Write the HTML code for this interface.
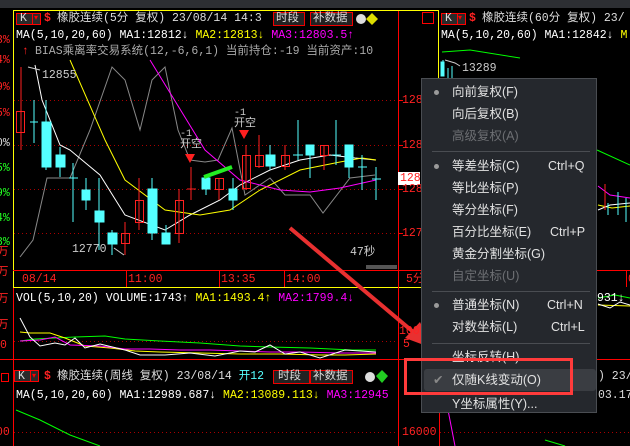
<!DOCTYPE html>
<html><head><meta charset="utf-8"><style>
*{margin:0;padding:0}
body{width:630px;height:446px;background:#000;overflow:hidden;position:relative;font-family:"Liberation Mono","Noto Sans CJK SC",monospace;}
.t{position:absolute;white-space:pre;font-size:11.5px;line-height:13px;}
.menu{position:absolute;left:421px;top:78px;width:176px;height:335px;background:#25282d;border:1px solid #4a4d52;box-sizing:border-box;}
.mi{position:absolute;left:30px;font-family:"Liberation Sans","Noto Sans CJK SC",sans-serif;font-size:12.5px;color:#e2e2e2;white-space:pre;line-height:16px}
.sc{position:absolute;font-family:"Liberation Sans",sans-serif;font-size:12.5px;color:#e2e2e2;line-height:16px}
.g{color:#6d6f73}
.sep{position:absolute;left:10px;right:6px;height:1px;background:#4a4d52}
.dot{position:absolute;left:12px;width:5px;height:5px;border-radius:50%;background:#9a9a9a}
</style></head><body>
<svg width="630" height="446" style="position:absolute;left:0;top:0">
<rect x="0" y="0" width="630" height="8" fill="#2d2f33"/>
<!-- left panel frame -->
<rect x="13.5" y="10.5" width="425" height="277" fill="none" stroke="#ffff00"/>
<line x1="398.5" y1="11" x2="398.5" y2="446" stroke="#ff0000"/>
<line x1="439.5" y1="288" x2="439.5" y2="446" stroke="#ff0000"/>
<line x1="13" y1="270.5" x2="630" y2="270.5" stroke="#ff0000"/>
<line x1="0" y1="359.5" x2="630" y2="359.5" stroke="#ff0000"/>
<line x1="126.5" y1="271" x2="126.5" y2="287" stroke="#f00"/>
<line x1="219.5" y1="271" x2="219.5" y2="287" stroke="#f00"/>
<line x1="284.5" y1="271" x2="284.5" y2="287" stroke="#f00"/>
<line x1="626.5" y1="271" x2="626.5" y2="287" stroke="#f00"/>
<line x1="13.5" y1="288" x2="13.5" y2="446" stroke="#f00"/>
<g stroke="#a00" stroke-dasharray="1,3">
<line x1="14" y1="100.5" x2="398" y2="100.5"/><line x1="14" y1="145.5" x2="398" y2="145.5"/>
<line x1="14" y1="189.5" x2="398" y2="189.5"/><line x1="14" y1="233.5" x2="398" y2="233.5"/>
<line x1="14" y1="432.5" x2="398" y2="432.5"/><line x1="440" y1="432.5" x2="630" y2="432.5"/>
<line x1="14" y1="341.5" x2="398" y2="341.5"/>
</g>
<g stroke="#f00"><line x1="398" y1="100.5" x2="403" y2="100.5"/><line x1="398" y1="145.5" x2="403" y2="145.5"/><line x1="398" y1="189.5" x2="403" y2="189.5"/><line x1="398" y1="233.5" x2="403" y2="233.5"/></g>
<!-- BIAS gray -->
<polyline fill="none" stroke="#888" points="20,257 33,240 47,178 70,178 90,130 112,67 125,80 140,130 152,80 165,67 178,130 190,160 205,162 218,160 232,128 245,195 270,178 285,195 310,195 323,213 350,178 375,175"/>
<polyline fill="none" stroke="#fff" points="35,65 42,100 60,145 70,150 100,175 125,215 165,230 190,215 220,200 240,185 270,170 300,160 330,155 355,158 376,160"/>
<polyline fill="none" stroke="#ffff00" points="70,60 105,140 125,180 165,210 200,215 230,210 260,190 300,170 340,162 362,158 376,160"/>
<polyline fill="none" stroke="#ff00ff" points="150,60 205,150 240,180 280,190 310,192 340,188 376,180"/>
<!-- candles -->
<g stroke="#54ffff" fill="#54ffff">
<line x1="34" y1="100" x2="34" y2="143"/><line x1="30" y1="122" x2="38" y2="122"/>
<line x1="46" y1="100" x2="46" y2="170"/><rect x="42" y="122" width="9" height="45"/>
<line x1="60" y1="147" x2="60" y2="177"/><rect x="56" y="155" width="9" height="12"/>
<line x1="73" y1="163" x2="73" y2="222"/><line x1="69" y1="178" x2="78" y2="178"/>
<line x1="86" y1="178" x2="86" y2="210"/><rect x="82" y="190" width="8" height="10"/>
<line x1="99" y1="178" x2="99" y2="250"/><rect x="95" y="211" width="9" height="11"/>
<line x1="112" y1="230" x2="112" y2="255"/><rect x="108" y="233" width="9" height="11"/>
<line x1="152" y1="178" x2="152" y2="240"/><rect x="148" y="189" width="9" height="44"/>
<line x1="166" y1="225" x2="166" y2="244"/><rect x="162" y="233" width="8" height="11"/>
<line x1="206" y1="175" x2="206" y2="195"/><rect x="202" y="178" width="8" height="11"/>
<line x1="233" y1="178" x2="233" y2="210"/><rect x="229" y="189" width="8" height="11"/>
<line x1="270" y1="145" x2="270" y2="170"/><rect x="266" y="155" width="9" height="11"/>
<line x1="298" y1="120" x2="298" y2="160"/><line x1="293" y1="155" x2="303" y2="155"/>
<line x1="310" y1="145" x2="310" y2="178"/><rect x="306" y="145" width="8" height="10"/>
<line x1="336" y1="120" x2="336" y2="165"/><line x1="332" y1="155" x2="341" y2="155"/>
<line x1="349" y1="145" x2="349" y2="178"/><rect x="345" y="145" width="8" height="22"/>
<line x1="362" y1="155" x2="362" y2="190"/><line x1="358" y1="167" x2="367" y2="167"/>
<line x1="376" y1="167" x2="376" y2="200"/><line x1="372" y1="179" x2="381" y2="179"/>
</g>
<g stroke="#ff2020" fill="none">
<line x1="21" y1="67" x2="21" y2="150"/><rect x="16.5" y="111.5" width="8" height="21"/>
<line x1="125" y1="222" x2="125" y2="255"/><rect x="121.5" y="233.5" width="8" height="10"/>
<line x1="139" y1="178" x2="139" y2="230"/><rect x="135.5" y="200.5" width="8" height="22"/>
<line x1="179" y1="189" x2="179" y2="243"/><rect x="175.5" y="200.5" width="8" height="33"/>
<line x1="191" y1="167" x2="191" y2="200"/><line x1="187" y1="189" x2="196" y2="189"/>
<line x1="219" y1="178" x2="219" y2="200"/><rect x="215.5" y="178.5" width="8" height="11"/>
<line x1="246" y1="145" x2="246" y2="190"/><rect x="242.5" y="155.5" width="8" height="33"/>
<line x1="259" y1="135" x2="259" y2="168"/><rect x="255.5" y="155.5" width="8" height="11"/>
<line x1="285" y1="145" x2="285" y2="170"/><rect x="281.5" y="155.5" width="8" height="11"/>
<line x1="324" y1="145" x2="324" y2="170"/><rect x="320.5" y="145.5" width="8" height="10"/>
</g>
<line x1="204" y1="177" x2="232" y2="167" stroke="#22ee22" stroke-width="4"/>
<polygon points="185,154 195,154 190,163" fill="#ff2020"/>
<polygon points="239,130 249,130 244,139" fill="#ff2020"/>
<line x1="114" y1="248" x2="124" y2="255" stroke="#ccc"/>
<line x1="28" y1="67" x2="40" y2="70" stroke="#ccc"/>
<rect x="366" y="265" width="31" height="4" fill="#555"/>
<!-- red arrow -->
<line x1="290" y1="228" x2="418" y2="336" stroke="#e83030" stroke-width="4"/>
<polygon points="432,348 405,338 420,322" fill="#e83030"/>
<!-- volume lines -->
<polyline fill="none" stroke="#00ff00" points="20,358 20,358"/>
<polyline fill="none" stroke="#00ff00" points="20,359 20,359"/>
<polyline fill="none" stroke="#00ee00" points="20,359 20,359"/>
<polyline fill="none" stroke="#00dd00" points="20,359 20,359"/>
<polyline fill="none" stroke="#00ff00" points="20,359 20,359"/>
<polyline fill="none" stroke="#00ff00" points="20,359 20,359"/>
<polyline fill="none" stroke="#00ff00" points="20,359 20,359"/>
<polyline fill="none" stroke="#0f0" points="20,359 20,359"/>
<polyline fill="none" stroke="#0f0" points="20,359 20,359"/>
<polyline fill="none" stroke="#0f0" points="20,359 20,359"/>
<polyline fill="none" stroke="#0f0" points="20,359 20,359"/>
<polyline fill="none" stroke="#0f0" points="20,359 20,359"/>
<polyline fill="none" stroke="#0f0" points="20,341 35,339 55,338 75,337 105,336 125,339 160,341 200,343 240,346 270,347 310,348 352,350 376,350"/>
<polyline fill="none" stroke="#ff0" points="20,332 30,333 50,333 65,338 85,346 110,348 135,351 160,352 200,353 240,354 280,354 320,355 345,355 376,354"/>
<polyline fill="none" stroke="#f0f" points="20,341 40,340 55,337 70,345 100,346 125,349 150,349 180,350 210,350 240,351 270,352 300,352 340,353 376,353"/>
<polyline fill="none" stroke="#fff" points="20,318 30,337 40,346 55,343 65,345 75,338 85,348 100,344 125,350 140,355 165,355 190,353 215,356 240,351 255,352 270,345 285,354 300,352 320,358 345,350 376,352"/>
<!-- bottom panel -->
<polyline fill="none" stroke="#0f0" points="16,410 40,420 70,435 100,446"/>
<polyline fill="none" stroke="#f0f" points="443,390 448,410 455,446"/>
<polyline fill="none" stroke="#0f0" points="545,440 565,446"/>
<polyline fill="none" stroke="#0f0" points="442,52 470,50 520,58"/>
<polyline fill="none" stroke="#0f0" points="597,150 630,165"/>
<g stroke="#54ffff"><line x1="443" y1="60" x2="443" y2="76"/><rect x="441" y="62" width="3" height="14" fill="#54ffff"/><line x1="448" y1="68" x2="448" y2="78"/><line x1="452" y1="66" x2="452" y2="78"/></g>
<polyline fill="none" stroke="#ccc" points="445,60 455,63 460,66"/>
<polyline fill="none" stroke="#f0f" points="598,186 610,195 630,198"/>
<polyline fill="none" stroke="#ff0" points="598,205 612,208 630,206"/>
<polyline fill="none" stroke="#fff" points="598,210 610,205 630,203"/>
<g stroke="#54ffff"><line x1="608" y1="203" x2="608" y2="215"/><line x1="618" y1="192" x2="618" y2="215"/><line x1="626" y1="198" x2="626" y2="222"/></g>
<line x1="605" y1="184" x2="605" y2="210" stroke="#f22"/>
<polyline fill="none" stroke="#0f0" points="598,298 615,295 630,298"/>
<polyline fill="none" stroke="#ff0" points="598,305 630,306"/>
<polyline fill="none" stroke="#fff" points="598,304 610,308 620,302 630,305"/>
<!-- header boxes -->
<rect x="16.5" y="13.5" width="24" height="11" fill="#2a2a2a" stroke="#f00"/><line x1="32.5" y1="14" x2="32.5" y2="24" stroke="#f00"/>
<rect x="273.5" y="12.5" width="31" height="13" fill="#222" stroke="#e00"/>
<rect x="310.5" y="12.5" width="42" height="13" fill="#222" stroke="#e00"/>
<rect x="14.5" y="370.5" width="24" height="11" fill="#2a2a2a" stroke="#f00"/><line x1="30.5" y1="371" x2="30.5" y2="381" stroke="#f00"/>
<rect x="273.5" y="370.5" width="36" height="13" fill="#222" stroke="#e00"/>
<rect x="310.5" y="370.5" width="42" height="13" fill="#222" stroke="#e00"/>
<rect x="441.5" y="13.5" width="24" height="11" fill="#2a2a2a" stroke="#f00"/><line x1="457.5" y1="14" x2="457.5" y2="24" stroke="#f00"/>
<rect x="422.5" y="12.5" width="11" height="11" fill="none" stroke="#f00"/>
<rect x="398" y="172" width="22" height="13" fill="#fff"/>
<rect x="1.5" y="373.5" width="7" height="8" fill="none" stroke="#f00"/>
<polygon points="382,370 388,376 382,383 376,376" fill="#2c2"/>
<circle cx="370" cy="377" r="5" fill="#ddd"/>
<polygon points="372,13 378,19 372,25 366,19" fill="#dd0"/>
<circle cx="361" cy="19" r="5" fill="#ddd"/>
</svg>
<!-- left header texts -->
<div class="t" style="left:20px;top:12px;color:#ddd">K</div>
<div class="t" style="left:34px;top:12px;color:#f00;font-size:8px">▾</div>
<div class="t" style="left:44px;top:12px;color:#f22;font-weight:bold">$</div>
<div class="t" style="left:57px;top:12px;color:#ddd">橡胶连续(5分 复权) 23/08/14 14:3</div>
<div class="t" style="left:276px;top:12px;color:#ddd">时段</div>
<div class="t" style="left:313px;top:12px;color:#ddd">补数据</div>
<div class="t" style="left:16px;top:29px;color:#fff">MA(5,10,20,60) MA1:12812↓ <span style="color:#ff0">MA2:12813↓</span> <span style="color:#f0f">MA3:12803.5↑</span></div>
<div class="t" style="left:22px;top:45px;color:#f22">↑</div>
<div class="t" style="left:35px;top:45px;color:#aaa">BIAS乘离率交易系统(12,-6,6,1) 当前持仓:-19 当前资产:10</div>
<div class="t" style="left:42px;top:69px;color:#ccc">12855</div>
<div class="t" style="left:72px;top:243px;color:#ccc">12770</div>
<div class="t" style="left:350px;top:246px;color:#ccc">47秒</div>
<div class="t" style="left:180px;top:128px;color:#ccc;font-size:10px">-1</div>
<div class="t" style="left:180px;top:139px;color:#ccc;font-size:11px">开空</div>
<div class="t" style="left:234px;top:107px;color:#ccc;font-size:10px">-1</div>
<div class="t" style="left:234px;top:118px;color:#ccc;font-size:11px">开空</div>
<!-- left percent axis -->
<div class="t" style="left:-4px;top:34px;color:#f22">3%</div>
<div class="t" style="left:-4px;top:54px;color:#f22">4%</div>
<div class="t" style="left:-4px;top:81px;color:#f22">9%</div>
<div class="t" style="left:-4px;top:107px;color:#f22">5%</div>
<div class="t" style="left:-4px;top:137px;color:#ddd">0%</div>
<div class="t" style="left:-4px;top:162px;color:#2f2">5%</div>
<div class="t" style="left:-4px;top:187px;color:#2f2">9%</div>
<div class="t" style="left:-4px;top:212px;color:#2f2">4%</div>
<div class="t" style="left:-4px;top:236px;color:#2f2">8%</div>
<div class="t" style="left:-3px;top:246px;color:#f22">万</div>
<div class="t" style="left:-3px;top:266px;color:#f22">万</div>
<div class="t" style="left:-3px;top:293px;color:#f22">万</div>
<div class="t" style="left:-3px;top:319px;color:#f22">万</div>
<div class="t" style="left:0px;top:339px;color:#f22">0</div>
<div class="t" style="left:-4px;top:426px;color:#f22">00</div>
<!-- right price axis -->
<div class="t" style="left:402px;top:94px;color:#f22">128</div>
<div class="t" style="left:402px;top:139px;color:#f22">128</div>
<div class="t" style="left:400px;top:172px;color:#f22">128</div>
<div class="t" style="left:402px;top:183px;color:#f22">128</div>
<div class="t" style="left:402px;top:227px;color:#f22">127</div>
<div class="t" style="left:399px;top:325px;color:#f22">100</div>
<div class="t" style="left:403px;top:338px;color:#f22">5</div>
<div class="t" style="left:402px;top:426px;color:#f22">16000</div>
<!-- time axis -->
<div class="t" style="left:22px;top:273px;color:#f22">08/14</div>
<div class="t" style="left:128px;top:273px;color:#f22">11:00</div>
<div class="t" style="left:221px;top:273px;color:#f22">13:35</div>
<div class="t" style="left:286px;top:273px;color:#f22">14:00</div>
<div class="t" style="left:406px;top:273px;color:#f22">5分</div>
<div class="t" style="left:628px;top:273px;color:#f22">08</div>
<!-- volume -->
<div class="t" style="left:16px;top:292px;color:#fff">VOL(5,10,20) VOLUME:1743↑ <span style="color:#ff0">MA1:1493.4↑</span> <span style="color:#f0f">MA2:1799.4↓</span></div>
<div class="t" style="left:597px;top:292px;color:#fff">931↓</div>
<!-- bottom -->
<div class="t" style="left:18px;top:370px;color:#ddd">K</div>
<div class="t" style="left:32px;top:370px;color:#f00;font-size:8px">▾</div>
<div class="t" style="left:44px;top:370px;color:#f22;font-weight:bold">$</div>
<div class="t" style="left:57px;top:370px;color:#ddd">橡胶连续(周线 复权) 23/08/14 <span style="color:#5ff">开12</span></div>
<div class="t" style="left:278px;top:370px;color:#ddd">时段</div>
<div class="t" style="left:313px;top:370px;color:#ddd">补数据</div>
<div class="t" style="left:16px;top:389px;color:#fff">MA(5,10,20,60) MA1:12989.687↓ <span style="color:#ff0">MA2:13089.113↓</span> <span style="color:#f0f">MA3:12945</span></div>
<div class="t" style="left:598px;top:370px;color:#ddd">) 23/</div>
<div class="t" style="left:598px;top:389px;color:#ddd">03.17</div>
<!-- right panel -->
<div class="t" style="left:445px;top:12px;color:#ddd">K</div>
<div class="t" style="left:458px;top:12px;color:#f00;font-size:8px">▾</div>
<div class="t" style="left:469px;top:12px;color:#f22;font-weight:bold">$</div>
<div class="t" style="left:482px;top:12px;color:#ddd">橡胶连续(60分 复权) 23/</div>
<div class="t" style="left:441px;top:29px;color:#fff">MA(5,10,20,60) MA1:12842↓ <span style="color:#ff0">M</span></div>
<div class="t" style="left:462px;top:62px;color:#ccc">13289</div>
<!-- menu -->
<div class="menu">
<div class="dot" style="top:11px"></div><div class="mi" style="top:5px">向前复权(F)</div>
<div class="mi" style="top:27px">向后复权(B)</div>
<div class="mi g" style="top:49px">高级复权(A)</div>
<div class="sep" style="top:72px"></div>
<div class="dot" style="top:85px"></div><div class="mi" style="top:79px">等差坐标(C)</div><div class="sc" style="left:126px;top:79px">Ctrl+Q</div>
<div class="mi" style="top:101px">等比坐标(P)</div>
<div class="mi" style="top:123px">等分坐标(F)</div>
<div class="mi" style="top:145px">百分比坐标(E)</div><div class="sc" style="left:128px;top:145px">Ctrl+P</div>
<div class="mi" style="top:167px">黄金分割坐标(G)</div>
<div class="mi g" style="top:189px">自定坐标(U)</div>
<div class="sep" style="top:212px"></div>
<div class="dot" style="top:224px"></div><div class="mi" style="top:218px">普通坐标(N)</div><div class="sc" style="left:125px;top:218px">Ctrl+N</div>
<div class="mi" style="top:240px">对数坐标(L)</div><div class="sc" style="left:129px;top:240px">Ctrl+L</div>
<div class="sep" style="top:264px"></div>
<div class="mi" style="top:270px">坐标反转(H)</div>
<div style="position:absolute;left:2px;top:290px;width:172px;height:22px;background:#3a3d42;border-radius:3px"></div>
<div class="mi" style="top:293px;left:11px;color:#888">✔</div>
<div class="mi" style="top:293px">仅随K线变动(O)</div>
<div class="mi" style="top:317px">Y坐标属性(Y)...</div>
</div>
<div style="position:absolute;left:404px;top:358px;width:169px;height:37px;border:3px solid #ff3b3b;box-sizing:border-box"></div>
</body></html>
